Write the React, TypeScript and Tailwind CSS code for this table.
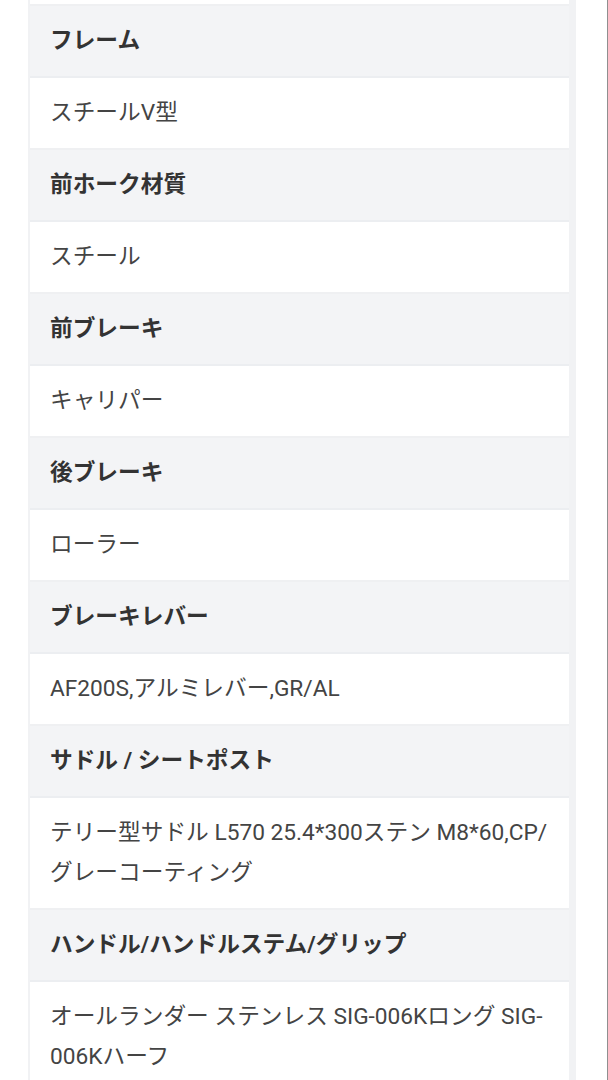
const specs: { label: string; value: string }[] = [
  { label: "フレーム", value: "スチールV型" },
  { label: "前ホーク材質", value: "スチール" },
  { label: "前ブレーキ", value: "キャリパー" },
  { label: "後ブレーキ", value: "ローラー" },
  { label: "ブレーキレバー", value: "AF200S,アルミレバー,GR/AL" },
  { label: "サドル / シートポスト", value: "テリー型サドル L570 25.4*300ステン M8*60,CP/グレーコーティング" },
  { label: "ハンドル/ハンドルステム/グリップ", value: "オールランダー ステンレス SIG-006Kロング SIG-006Kハーフ" },
];

export default function App() {
  return (
    <div
      className="h-[1080px] w-full overflow-hidden bg-white border-r border-[#8f8f8f]"
      style={{ fontFamily: 'Roboto, "Noto Sans CJK JP", sans-serif' }}
    >
      <div className="ml-[28px] w-[548px] border-l-2 border-r-[7px] border-[#f1f2f4] bg-white">
        <div className="h-[6px] border-b-2 border-[#eff0f2]" />
        {specs.map((s) => (
          <div key={s.label}>
            <div className="bg-[#f3f4f6] border-b-2 border-[#eceef1] px-[20px] py-[15px] text-[22.7px] leading-[40px] font-bold text-[#333333]">
              {s.label}
            </div>
            <div className="bg-white border-b-2 border-[#eff0f2] pl-[20px] pr-[16px] py-[15px] text-[22.7px] leading-[40px] text-[#444444]">
              {s.value}
            </div>
          </div>
        ))}
      </div>
    </div>
  );
}
